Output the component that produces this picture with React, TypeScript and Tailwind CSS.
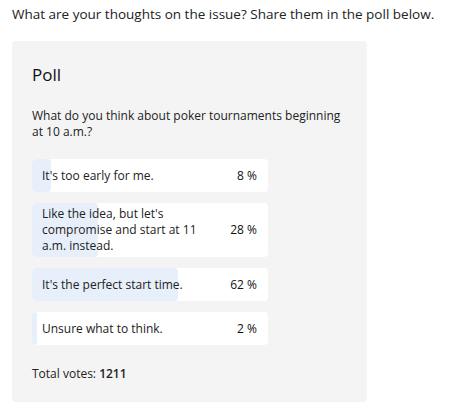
const options = [
  { label: "It's too early for me.", pct: 8 },
  { label: "Like the idea, but let's compromise and start at 11 a.m. instead.", pct: 28 },
  { label: "It's the perfect start time.", pct: 62 },
  { label: "Unsure what to think.", pct: 2 },
];

export default function App() {
  return (
    <div className="min-h-screen bg-white px-3 pt-[5px] text-[#222]" style={{ fontFamily: '"Open Sans", sans-serif' }}>
      <p className="text-[13.5px] leading-[18px]">What are your thoughts on the issue? Share them in the poll below.</p>

      <div className="mt-[18px] w-[355px] rounded-[4px] bg-[#f4f4f4] px-5 pt-[22px] pb-[20px]">
        <h2 className="text-[17px] font-medium leading-[24px] text-[#111]">Poll</h2>
        <p className="mt-[21px] text-[12px] leading-[16px]">
          What do you think about poker tournaments beginning at 10 a.m.?
        </p>

        <div className="mt-[19px] flex w-[236px] flex-col gap-[11px]">
          {options.map((o) => (
            <div key={o.label} className="relative overflow-hidden rounded-[4px] bg-white">
              <div className="absolute inset-y-0 left-0 rounded-[4px] bg-[#e7effa]" style={{ width: `${o.pct}%` }} />
              <div className="relative flex min-h-[33px] items-center justify-between py-[3px] pl-[10px] pr-[11px] text-[12px] leading-[16px]">
                <span className="w-[165px]">{o.label}</span>
                <span className="text-[#111]">{o.pct} %</span>
              </div>
            </div>
          ))}
        </div>

        <p className="mt-[21px] text-[12px] leading-[16px]">
          Total votes: <span className="font-semibold">1211</span>
        </p>
      </div>
    </div>
  );
}
